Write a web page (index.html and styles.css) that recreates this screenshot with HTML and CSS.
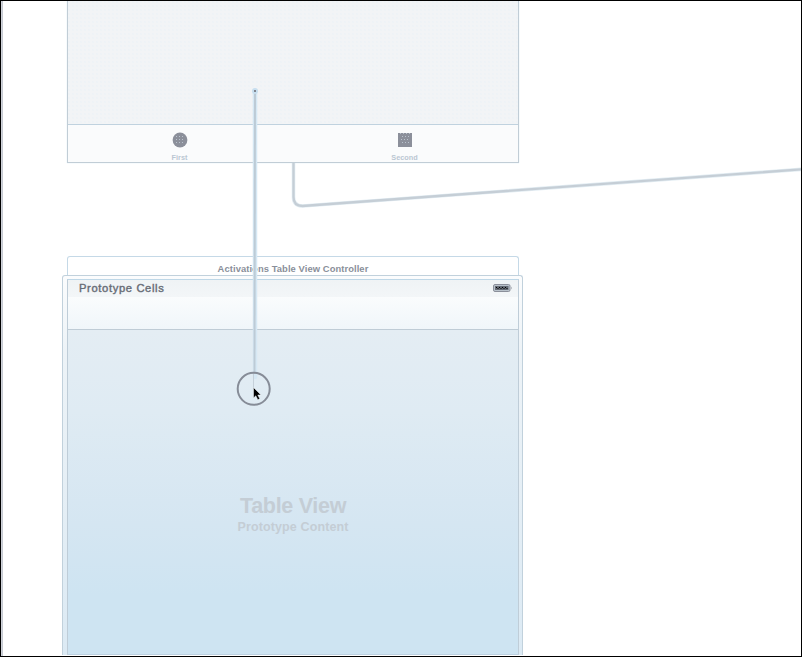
FILE: index.html
```
<!DOCTYPE html>
<html lang="en">
<head>
<meta charset="utf-8">
<title>Storyboard</title>
<link rel="stylesheet" href="styles.css">
</head>
<body>
<main class="canvas">
  <section class="scene tab-scene">
    <div class="tab-content"></div>
    <nav class="tab-bar">
      <div class="tab">
        <svg class="tab-icon" viewBox="0 0 16 16"><circle cx="8" cy="8" r="7.400" fill="#8b8f9a"/><path d="M4 4.500h9M4 7.500h9M4 10.500h9" stroke="#b9c2cd" stroke-dasharray="1 2"/></svg>
        <span class="tab-label">First</span>
      </div>
      <div class="tab">
        <svg class="tab-icon" viewBox="0 0 16 16"><path d="M1 1h14v14H1z" fill="#8b8f9a"/><path d="M3 1.500h12M5 4.500h9M4 7.500h9M5 10.500h8" stroke="#b9c2cd" stroke-dasharray="1 2"/></svg>
        <span class="tab-label">Second</span>
      </div>
    </nav>
  </section>

  <section class="scene table-scene">
    <header class="scene-title"><span>Activations Table View Controller</span></header>
    <div class="device">
      <div class="screen">
        <div class="status-bar">
          <span class="status-label">Prototype Cells</span>
          <svg class="battery" viewBox="0 0 20 8"><rect x=".5" y=".5" width="16.500" height="7" rx="1.500" fill="#b9c2cb" stroke="#8b8f9a"/><rect x="2" y="2" width="13.500" height="4" fill="#656b75"/><path d="M3 3.500h12M4.500 4.500h11" stroke="#000" stroke-dasharray="1 2"/><path d="M18 2.500q1.500 1.500 0 3z" fill="#8b8f9a"/></svg>
        </div>
        <div class="prototype-cell"></div>
        <div class="table-body">
          <h1>Table View</h1>
          <p>Prototype Content</p>
        </div>
      </div>
    </div>
  </section>

  <svg class="connections" viewBox="0 0 802 657">
    <path d="M293.500 163V197Q293.500 206 302.500 206L802 169.300" fill="none" stroke="#e3edf3" stroke-width="3.600"/>
    <path d="M293.500 163V197Q293.500 206 302.500 206L802 169.300" fill="none" stroke="#c5ced6" stroke-width="2.300"/>
    <path d="M255 91V377" stroke="#d6e8f4" stroke-width="4.500" stroke-linecap="round"/>
    <path d="M255 92L254.500 372" stroke="#bdcbd6" stroke-width="2"/>
    <path d="M253.500 372V390" stroke="#c5d0d9"/>
    <circle cx="255" cy="91" r="3" fill="#c8dfef"/>
    <path d="M254 90h2v2h-2z" fill="#80858f"/>
    <circle cx="253.700" cy="388.800" r="16" fill="none" stroke="#868c97" stroke-width="2"/>
    <path d="M253.500 387.500v10.500l2.300-2.200 2 4 2-1-2-3.800h3.200z" fill="#000" stroke="#f5f8fa" stroke-width=".5"/>
  </svg>
</main>
</body>
</html>
```
FILE: styles.css
```
* { box-sizing: border-box; }

body {
  margin: 0;
  font-family: "Liberation Sans", Arial, sans-serif;
}

.canvas {
  position: relative;
  width: 802px;
  height: 657px;
  overflow: hidden;
  background: #fff;
  border: 1px solid #000;
  box-shadow: inset 1px 0 #d0d3da, inset 2px 0 #c5c9d1;
}

.scene {
  position: absolute;
  display: flex;
  flex-direction: column;
}

.tab-scene {
  left: 66px;
  top: 0;
  width: 452px;
  height: 162px;
  border: 1px solid #c1cdd6;
  border-top: 0;
  box-shadow: 0 0 1px #cfe3f0;
}

.tab-content {
  flex: 1;
  background: radial-gradient(circle at 1px 1px, #eaf1f6 .6px, transparent .8px) 0 0 / 4px 4px #f2f4f6;
}

.tab-bar {
  display: flex;
  height: 38px;
  border-top: 1px solid #c0d2df;
  background: #fafbfc;
}

.tab {
  flex: 1;
  display: flex;
  flex-direction: column;
  align-items: center;
  padding: 7px 2px 0 0;
}

.tab-icon { width: 16px; height: 16px; }

.tab-label {
  margin-top: 5px;
  font-size: 7.300px;
  line-height: 9px;
  font-weight: bold;
  color: #bac7d3;
}

.table-scene {
  left: 61px;
  top: 255px;
  width: 461px;
  height: 399px;
}

.scene-title {
  height: 19px;
  margin: 0 4px 0 5px;
  padding-top: 5px;
  border: 1px solid #c5d9e7;
  border-bottom: 0;
  border-radius: 3px 3px 0 0;
  text-align: center;
  font-size: 9.400px;
  line-height: 13px;
  letter-spacing: .08px;
  font-weight: bold;
  color: #8a8f9a;
}

.device {
  flex: 1;
  padding: 3px 3px 0 4px;
  border: 1px solid #c1d1dc;
  border-bottom: 0;
  border-radius: 3px 3px 0 0;
  background: linear-gradient(#fbfcfd, #edf3f7 20%, #dceaf4);
}

.screen {
  display: flex;
  flex-direction: column;
  height: 100%;
  border: 1px solid #bfcdd8;
  border-top-color: #bed7e7;
  border-bottom-color: #bdd1e1;
}

.status-bar {
  display: flex;
  justify-content: space-between;
  height: 17px;
  padding: 1px 5px 0 11px;
  background: linear-gradient(#eff3f5, #f3f6f8);
}

.status-label {
  font-size: 11.200px;
  line-height: 14px;
  color: #60656f;
  letter-spacing: .64px;
  -webkit-text-stroke: .4px #6d727c;
}

.battery { width: 20px; height: 8px; margin-top: 3px; }

.prototype-cell {
  height: 33px;
  border-bottom: 1px solid #bfccd6;
  background: linear-gradient(#fafcfd, #f0f6fa);
}

.table-body {
  flex: 1;
  display: flex;
  flex-direction: column;
  align-items: center;
  padding-top: 163px;
  background: linear-gradient(#e4edf3 0, #dfebf3 25%, #d5e6f2 60%, #cee4f2 82%);
  color: #c4cdd5;
}

.table-body h1 {
  margin: 0;
  font-size: 21.500px;
  line-height: 26px;
  letter-spacing: -.3px;
}

.table-body p {
  margin: 1px 0 0;
  font-size: 12.500px;
  line-height: 15px;
  letter-spacing: .12px;
  font-weight: bold;
}

.connections {
  position: absolute;
  left: -1px;
  top: -1px;
  width: 802px;
  height: 657px;
}
```
